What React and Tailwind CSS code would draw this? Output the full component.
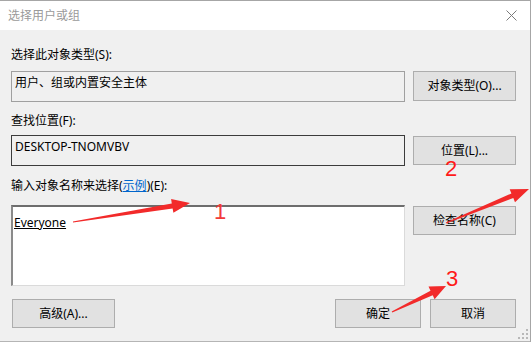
import React from "react";

function arrowPoints(tx, ty, px, py, L, H, w, tw) {
  const dx = px - tx, dy = py - ty;
  const len = Math.hypot(dx, dy);
  const ux = dx / len, uy = dy / len;
  const nx = -uy, ny = ux;
  const bx = px - ux * L, by = py - uy * L;
  const pts = [
    [tx + nx * tw, ty + ny * tw],
    [bx + nx * w, by + ny * w],
    [bx + nx * H, by + ny * H],
    [px, py],
    [bx - nx * H, by - ny * H],
    [bx - nx * w, by - ny * w],
    [tx - nx * tw, ty - ny * tw],
  ];
  return pts.map((p) => p.map((v) => v.toFixed(1)).join(",")).join(" ");
}

function Btn({ children, className = "" }) {
  return (
    <div
      className={
        "flex items-center justify-center bg-[#e1e1e1] border border-[#adadad] text-[12px] leading-[16px] text-black " +
        className
      }
    >
      {children}
    </div>
  );
}

export default function App() {
  return (
    <div className="relative w-[531px] h-[342px] overflow-hidden bg-[#f0f0f0] border-t border-r border-[#a6a6a6] font-['Noto_Sans','Noto_Sans_CJK_SC',sans-serif] text-[12px] leading-[16px] text-black">
      {/* title bar */}
      <div className="h-[29px] bg-white flex items-center justify-between pl-[8px] pr-[12px]">
        <span className="text-[#9a9a9a] text-[12px]">选择用户或组</span>
        <svg width="11" height="11" viewBox="0 0 11 11" className="mr-[1px]">
          <path d="M0.5 0.5 L10.5 10.5 M10.5 0.5 L0.5 10.5" stroke="#7a7a7a" strokeWidth="1" />
        </svg>
      </div>

      <div className="flex flex-col pl-[11px] pr-[14px]">
        <div className="mt-[17px] h-[16px]">选择此对象类型(S):</div>
        <div className="mt-[8px] flex gap-[8px]">
          <div className="w-[394px] h-[31px] border border-[#a0a0a0] pt-[3px] pl-[3px]">
            用户、组或内置安全主体
          </div>
          <Btn className="w-[103px] h-[30px]">对象类型(O)...</Btn>
        </div>

        <div className="mt-[11px] h-[16px]">查找位置(F):</div>
        <div className="mt-[6px] flex gap-[8px]">
          <div className="w-[394px] h-[31px] border border-[#3c3c3c] pt-[3px] pl-[3px]">
            DESKTOP-TNOMVBV
          </div>
          <Btn className="w-[103px] h-[29px] mt-[1px]">位置(L)...</Btn>
        </div>

        <div className="mt-[12px] h-[16px]">
          输入对象名称来选择(
          <span className="text-[#0066cc] underline">示例</span>
          )(E):
        </div>
        <div className="mt-[11px] flex gap-[8px]">
          <div className="w-[394px] h-[81px] bg-white border-t-2 border-l-2 border-t-[#6d6d6d] border-l-[#8a8a8a] border-r border-b border-r-[#dadada] border-b-[#dadada] pt-[8px] pl-[1px]">
            <span className="underline">Everyone</span>
          </div>
          <Btn className="w-[103px] h-[29px] mt-[1px]">检查名称(C)</Btn>
        </div>

        <div className="mt-[13px] flex">
          <Btn className="w-[103px] h-[29px] ml-[1px]">高级(A)...</Btn>
          <div className="flex-1" />
          <Btn className="w-[86px] h-[29px]">确定</Btn>
          <Btn className="w-[86px] h-[29px] ml-[9px]">取消</Btn>
        </div>
      </div>

      {/* bottom edge of window below */}
      <div className="absolute left-0 right-0 bottom-0 h-[1px] bg-[#b5b5b5]" />

      {/* resize grip */}
      <svg className="absolute right-[2px] bottom-[3px]" width="10" height="10" viewBox="0 0 10 10">
        {[
          [8, 0], [8, 4], [4, 4], [8, 8], [4, 8], [0, 8],
        ].map(([x, y], i) => (
          <rect key={i} x={x} y={y} width="2" height="2" fill="#b8b8b8" />
        ))}
      </svg>

      {/* annotations */}
      <svg className="absolute left-0 top-0 pointer-events-none" width="531" height="342">
        <polygon points={arrowPoints(73, 221, 190, 202, 18, 7, 2.5, 0.6)} fill="#f22a2a" />
        <polygon points={arrowPoints(446, 222, 529, 188, 18, 7, 2.5, 0.6)} fill="#f22a2a" />
        <polygon points={arrowPoints(392, 311, 446, 285, 16, 7, 2.5, 0.6)} fill="#f22a2a" />
      </svg>
      <div className="absolute left-[214px] top-[199px] text-[22px] leading-[24px] text-[#f23a3a] font-['Liberation_Sans',sans-serif]">
        1
      </div>
      <div className="absolute left-[445px] top-[156px] text-[22px] leading-[24px] text-[#ff1a1a] font-['Liberation_Sans',sans-serif]">
        2
      </div>
      <div className="absolute left-[446px] top-[266px] text-[22px] leading-[24px] text-[#ff1a1a] font-['Liberation_Sans',sans-serif]">
        3
      </div>
    </div>
  );
}
